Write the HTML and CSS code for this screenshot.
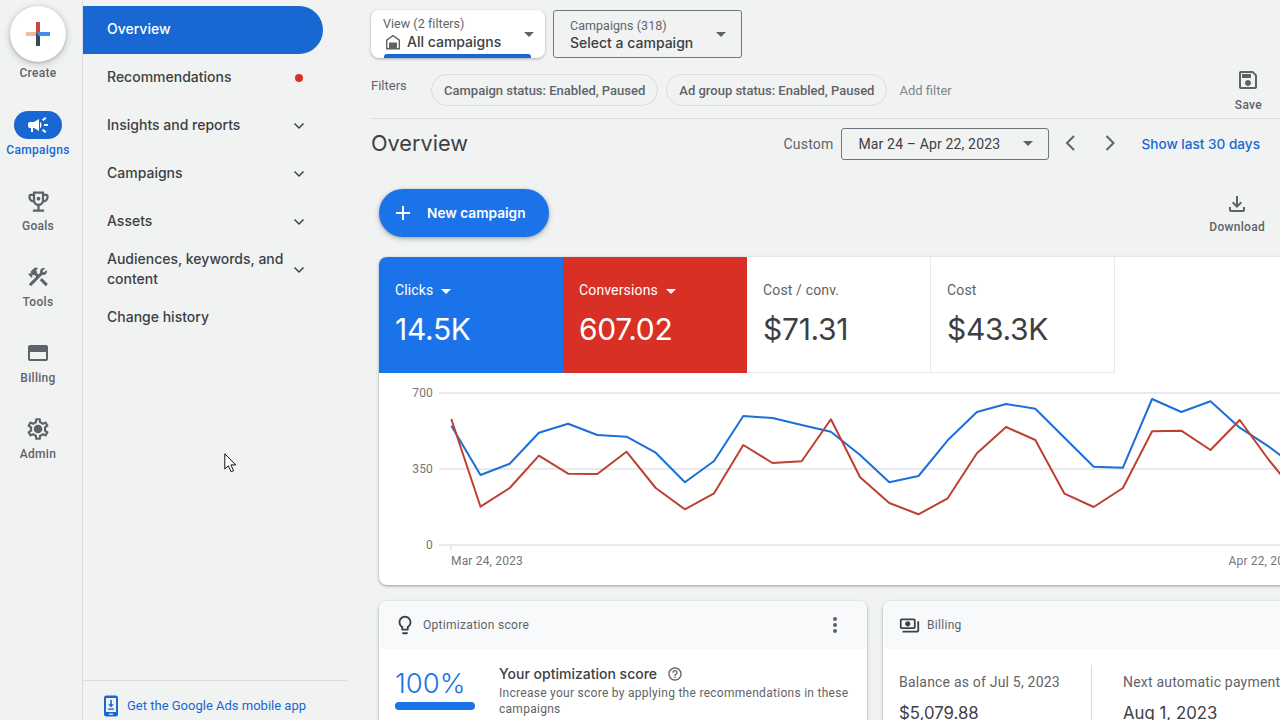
FILE: index.html
```html
<!DOCTYPE html>
<html lang="en">
<head>
<meta charset="utf-8">
<title>Overview</title>
<link rel="stylesheet" href="styles.css">
</head>
<body>
<aside class="rail">
  <div class="create">
    <div class="create-btn">
      <svg width="24" height="24" viewBox="0 0 24 24"><rect x="0" y="10" width="12" height="4" fill="#f0bd96"/><rect x="10" y="12" width="4" height="12" fill="#34495e"/><rect x="10" y="0" width="4" height="12" fill="#d0473a"/><rect x="12" y="10" width="12" height="4" fill="#4a8ae8"/></svg>
    </div>
    <span class="rail-label">Create</span>
  </div>
  <div class="rail-item active">
    <span class="rail-icon"><svg width="24" height="24" viewBox="0 0 24 24"><path d="M18 11v2h4v-2h-4zm-2 6.61c.96.71 2.21 1.65 3.2 2.39.4-.53.8-1.07 1.2-1.6-.99-.74-2.24-1.68-3.2-2.4-.4.54-.8 1.08-1.2 1.61zM20.4 5.6c-.4-.53-.8-1.07-1.2-1.6-.99.74-2.24 1.68-3.2 2.4.4.53.8 1.07 1.2 1.6.96-.72 2.21-1.65 3.2-2.4zM4 9c-1.1 0-2 .9-2 2v2c0 1.1.9 2 2 2h1v4h2v-4h1l5 3V6L8 9H4zm11.5 3c0-1.33-.58-2.53-1.5-3.35v6.69c.92-.81 1.5-2.01 1.5-3.34z"/></svg></span>
    <span class="rail-label">Campaigns</span>
  </div>
  <div class="rail-item">
    <span class="rail-icon"><svg width="27" height="27" viewBox="0 0 24 24"><path d="M19 5h-2V3H7v2H5c-1.1 0-2 .9-2 2v1c0 2.55 1.92 4.63 4.39 4.94.63 1.5 1.98 2.63 3.61 2.96V19H7v2h10v-2h-4v-3.1c1.63-.33 2.98-1.46 3.61-2.96C19.08 12.63 21 10.55 21 8V7c0-1.1-.9-2-2-2zM5 8V7h2v3.82C5.84 10.4 5 9.3 5 8zm7 6c-1.65 0-3-1.35-3-3V5h6v6c0 1.65-1.35 3-3 3zm7-6c0 1.3-.84 2.4-2 2.82V7h2v1z"/><circle cx="12" cy="9.5" r="1.7"/></svg></span>
    <span class="rail-label">Goals</span>
  </div>
  <div class="rail-item">
    <span class="rail-icon"><svg width="24" height="24" viewBox="0 0 24 24"><path d="M13.783 15.172l2.121-2.121 5.996 5.996-2.121 2.121zM17.5 10c1.93 0 3.5-1.57 3.5-3.5 0-.58-.16-1.12-.41-1.6l-2.7 2.7-1.49-1.49 2.7-2.7c-.48-.25-1.02-.41-1.6-.41C15.57 3 14 4.57 14 6.5c0 .41.08.8.21 1.16l-1.85 1.85-1.78-1.78.71-.71-1.41-1.41L12 3.49c-1.17-1.17-3.07-1.17-4.24 0L4.22 7.03l1.41 1.41H2.81l-.71.71 3.54 3.54.71-.71V9.15l1.41 1.41.71-.71 1.78 1.78-7.41 7.41 2.12 2.12L16.34 9.79c.36.13.75.21 1.16.21z"/></svg></span>
    <span class="rail-label">Tools</span>
  </div>
  <div class="rail-item">
    <span class="rail-icon"><svg width="24" height="24" viewBox="0 0 24 24"><path d="M20 4H4c-1.11 0-1.99.89-1.99 2L2 18c0 1.11.89 2 2 2h16c1.11 0 2-.89 2-2V6c0-1.11-.89-2-2-2zm0 14H4v-7h16v7zm0-11H4V6h16v1z"/><rect x="3" y="5" width="18" height="5"/></svg></span>
    <span class="rail-label">Billing</span>
  </div>
  <div class="rail-item">
    <span class="rail-icon"><svg width="26" height="26" viewBox="0 0 24 24"><path d="M19.43 12.98c.04-.32.07-.64.07-.98 0-.34-.03-.66-.07-.98l2.11-1.65c.19-.15.24-.42.12-.64l-2-3.46c-.09-.16-.26-.25-.44-.25-.06 0-.12.01-.17.03l-2.49 1c-.52-.4-1.08-.73-1.69-.98l-.38-2.65C14.46 2.18 14.25 2 14 2h-4c-.25 0-.46.18-.49.42l-.38 2.65c-.61.25-1.17.59-1.69.98l-2.49-1c-.06-.02-.12-.03-.18-.03-.17 0-.34.09-.43.25l-2 3.46c-.13.22-.07.49.12.64l2.11 1.65c-.04.32-.07.65-.07.98 0 .33.03.66.07.98l-2.11 1.65c-.19.15-.24.42-.12.64l2 3.46c.09.16.26.25.44.25.06 0 .12-.01.17-.03l2.49-1c.52.4 1.08.73 1.69.98l.38 2.65c.03.24.24.42.49.42h4c.25 0 .46-.18.49-.42l.38-2.65c.61-.25 1.17-.59 1.69-.98l2.49 1c.06.02.12.03.18.03.17 0 .34-.09.43-.25l2-3.46c.12-.22.07-.49-.12-.64l-2.11-1.65zm-1.98-1.71c.04.31.05.52.05.73 0 .21-.02.43-.05.73l-.14 1.13.89.7 1.08.84-.7 1.21-1.27-.51-1.04-.42-.9.68c-.43.32-.84.56-1.25.73l-1.06.43-.16 1.13-.2 1.35h-1.4l-.19-1.35-.16-1.13-1.06-.43c-.43-.18-.83-.41-1.23-.71l-.91-.7-1.06.43-1.27.51-.7-1.21 1.08-.84.89-.7-.14-1.13c-.03-.31-.05-.54-.05-.74s.02-.43.05-.73l.14-1.13-.89-.7-1.08-.84.7-1.21 1.27.51 1.04.42.9-.68c.43-.32.84-.56 1.25-.73l1.06-.43.16-1.13.2-1.35h1.39l.19 1.35.16 1.13 1.06.43c.43.18.83.41 1.23.71l.91.7 1.06-.43 1.27-.51.7 1.21-1.07.85-.89.7.14 1.13zM12 8c-2.21 0-4 1.79-4 4s1.79 4 4 4 4-1.79 4-4-1.79-4-4-4z"/></svg></span>
    <span class="rail-label">Admin</span>
  </div>
</aside>

<nav class="nav">
  <ul class="nav-list">
    <li class="nav-item selected"><span class="nav-text">Overview</span></li>
    <li class="nav-item"><span class="nav-text">Recommendations</span><span class="dot"></span></li>
    <li class="nav-item"><span class="nav-text">Insights and reports</span><svg class="chev" width="12" height="8" viewBox="0 0 12 8"><path d="M1.5 1.5 6 6l4.5-4.5"/></svg></li>
    <li class="nav-item"><span class="nav-text">Campaigns</span><svg class="chev" width="12" height="8" viewBox="0 0 12 8"><path d="M1.5 1.5 6 6l4.5-4.5"/></svg></li>
    <li class="nav-item"><span class="nav-text">Assets</span><svg class="chev" width="12" height="8" viewBox="0 0 12 8"><path d="M1.5 1.5 6 6l4.5-4.5"/></svg></li>
    <li class="nav-item"><span class="nav-text">Audiences, keywords, and content</span><svg class="chev" width="12" height="8" viewBox="0 0 12 8"><path d="M1.5 1.5 6 6l4.5-4.5"/></svg></li>
    <li class="nav-item"><span class="nav-text">Change history</span></li>
  </ul>
  <div class="nav-foot">
    <svg width="16" height="22" viewBox="0 0 16 22"><rect x="1" y="0.5" width="14" height="21" rx="2.5" fill="#1967d2"/><rect x="3" y="3" width="10" height="14" fill="#f1f3f3"/><rect x="6" y="18.6" width="4" height="1.2" fill="#f1f3f3"/><path d="M7.2 5h1.6v4.2h2L8 12.6 5.200 9.200h2z" fill="#1967d2"/><rect x="5" y="13.500" width="6" height="1.300" fill="#1967d2"/></svg>
    <span>Get the Google Ads mobile app</span>
  </div>
</nav>

<main class="main">
  <header class="top">
    <div class="pickers">
      <div class="picker view">
        <div class="picker-body">
          <span class="picker-small">View (2 filters)</span>
          <span class="picker-big"><svg width="16" height="16" viewBox="0 0 16 16"><path d="M8 .8 1 5.800V15.500h14V5.800L8 .8zM13.600 14H12V8.500H4V14H2.400V6.500L8 2.500l5.600 4V14z" fill="#5f6368"/><rect x="5" y="9.500" width="6" height="5" fill="#5f6368"/></svg>All campaigns</span>
        </div>
        <span class="caret"></span>
        <span class="view-bar"></span>
      </div>
      <div class="picker outlined">
        <div class="picker-body">
          <span class="picker-small">Campaigns (318)</span>
          <span class="picker-big">Select a campaign</span>
        </div>
        <span class="caret"></span>
      </div>
    </div>
    <div class="filters">
      <span class="filters-label">Filters</span>
      <span class="chip">Campaign status: Enabled, Paused</span>
      <span class="chip">Ad group status: Enabled, Paused</span>
      <span class="add-filter">Add filter</span>
      <div class="tool save">
        <svg width="24" height="24" viewBox="0 0 24 24"><path d="M17 3H5c-1.110 0-2 .9-2 2v14c0 1.100.89 2 2 2h14c1.100 0 2-.9 2-2V7l-4-4zm2 16H5V5h11.170L19 7.830V19zm-7-7c-1.660 0-3 1.340-3 3s1.340 3 3 3 3-1.340 3-3-1.340-3-3-3zM6 6h9v4H6z"/></svg>
        <span>Save</span>
      </div>
    </div>
  </header>

  <div class="title-row">
    <h1>Overview</h1>
    <div class="range">
      <span class="custom">Custom</span>
      <div class="date-box"><span>Mar 24 – Apr 22, 2023</span><span class="caret"></span></div>
      <svg class="arrow" width="24" height="24" viewBox="0 0 24 24"><path d="M16 5 9 12l7 7"/></svg>
      <svg class="arrow" width="24" height="24" viewBox="0 0 24 24"><path d="M8.500 5l7 7-7 7"/></svg>
      <span class="last30">Show last 30 days</span>
    </div>
  </div>

  <div class="action-row">
    <button class="new-campaign" type="button">
      <svg width="24" height="24" viewBox="0 0 24 24"><path d="M19 13h-6v6h-2v-6H5v-2h6V5h2v6h6v2z"/></svg>
      <span>New campaign</span>
    </button>
    <div class="tool download">
      <svg width="24" height="24" viewBox="0 0 24 24"><path d="M18 15v3H6v-3H4v3c0 1.100.9 2 2 2h12c1.100 0 2-.9 2-2v-3h-2zm-1-4-1.410-1.410L13 12.170V4h-2v8.170L8.410 9.590 7 11l5 5 5-5z"/></svg>
      <span>Download</span>
    </div>
  </div>

  <section class="card perf">
    <div class="tiles">
      <div class="tile blue"><div class="tile-title">Clicks<span class="caret white"></span></div><div class="tile-value">14.5K</div></div>
      <div class="tile red"><div class="tile-title">Conversions<span class="caret white"></span></div><div class="tile-value">607.02</div></div>
      <div class="tile plain"><div class="tile-title">Cost / conv.</div><div class="tile-value">$71.31</div></div>
      <div class="tile plain"><div class="tile-title">Cost</div><div class="tile-value">$43.3K</div></div>
    </div>
    <svg class="chart" width="1000" height="212" viewBox="379 373 1000 212">
      <g class="grid">
        <line x1="439" y1="393" x2="1379" y2="393"/>
        <line x1="439" y1="469" x2="1379" y2="469"/>
        <line x1="439" y1="545" x2="1379" y2="545"/>
        <line x1="451" y1="545" x2="451" y2="551"/>
      </g>
      <g class="axis">
        <text x="433" y="397" text-anchor="end">700</text>
        <text x="433" y="473" text-anchor="end">350</text>
        <text x="433" y="549" text-anchor="end">0</text>
        <text x="451" y="565">Mar 24, 2023</text>
        <text x="1228.500" y="565">Apr 22, 2023</text>
      </g>
      <polyline class="line-blue" points="451.3,425.700 480.500,475 509.700,463.700 538.900,432.700 568.100,423.700 597.300,435 626.500,436.700 655.700,452.700 684.900,482.300 714.100,461 743.300,416 772.500,418 801.700,425 830.900,431.700 860.100,455 889.300,482.300 918.500,476 947.700,440.300 976.900,412 1006.100,404 1035.300,408.700 1064.500,437.700 1093.700,466.700 1122.900,467.700 1152.100,399 1181.300,412 1210.500,401.300 1239.700,427.700 1268.900,446.700 1298.100,468.700"/>
      <polyline class="line-red" points="451.3,419 480.500,506.700 509.700,488 538.900,455.700 568.100,473.700 597.300,474 626.500,451.700 655.700,488 684.900,509.300 714.100,493.300 743.300,445 772.500,463 801.700,461.300 830.900,419.300 860.100,477.300 889.300,503 918.500,514.300 947.700,498.300 976.900,453.300 1006.100,427 1035.300,440 1064.500,493.700 1093.700,507 1122.900,488 1152.100,431.300 1181.300,430.700 1210.500,450 1239.700,420 1268.900,460 1298.100,496"/>
    </svg>
  </section>

  <div class="cards">
    <section class="card score">
      <div class="card-head">
        <svg class="bulb" width="22" height="22" viewBox="0 0 24 24"><path d="M9 21c0 .55.45 1 1 1h4c.55 0 1-.45 1-1v-1H9v1zm3-19C8.140 2 5 5.140 5 9c0 2.380 1.190 4.470 3 5.740V17c0 .55.45 1 1 1h6c.55 0 1-.45 1-1v-2.260c1.810-1.270 3-3.360 3-5.740 0-3.860-3.140-7-7-7zm2.850 11.100-.85.6V16h-4v-2.300l-.85-.6C7.800 12.160 7 10.630 7 9c0-2.760 2.240-5 5-5s5 2.240 5 5c0 1.630-.8 3.160-2.150 4.100z"/></svg>
        <span class="card-title">Optimization score</span>
        <svg class="more" width="24" height="24" viewBox="0 0 24 24"><circle cx="12" cy="6" r="2"/><circle cx="12" cy="12" r="2"/><circle cx="12" cy="18" r="2"/></svg>
      </div>
      <div class="score-body">
        <div class="score-left">
          <div class="score-num">100%</div>
          <div class="score-bar"></div>
        </div>
        <div class="score-text">
          <div class="score-title">Your optimization score
            <svg width="16" height="16" viewBox="0 0 24 24"><path d="M11 18h2v-2h-2v2zm1-16C6.480 2 2 6.480 2 12s4.480 10 10 10 10-4.480 10-10S17.520 2 12 2zm0 18c-4.410 0-8-3.590-8-8s3.590-8 8-8 8 3.590 8 8-3.590 8-8 8zm0-14c-2.210 0-4 1.790-4 4h2c0-1.100.9-2 2-2s2 .9 2 2c0 2-3 1.750-3 5h2c0-2.250 3-2.500 3-5 0-2.210-1.790-4-4-4z"/></svg>
          </div>
          <p>Increase your score by applying the recommendations in these campaigns</p>
        </div>
      </div>
    </section>
    <section class="card billing">
      <div class="card-head">
        <svg class="cash" width="21" height="21" viewBox="0 0 24 24"><path d="M19 14V6c0-1.100-.9-2-2-2H3c-1.100 0-2 .9-2 2v8c0 1.100.9 2 2 2h14c1.100 0 2-.9 2-2zm-2 0H3V6h14v8zm-7-7c-1.660 0-3 1.340-3 3s1.340 3 3 3 3-1.340 3-3-1.340-3-3-3zm13 0v11c0 1.100-.9 2-2 2H4v-2h17V7h2z"/></svg>
        <span class="card-title">Billing</span>
      </div>
      <div class="billing-body">
        <div class="bill-col first"><div class="bill-label">Balance as of Jul 5, 2023</div><div class="bill-value">$5,079.88</div></div>
        <div class="bill-col"><div class="bill-label">Next automatic payment</div><div class="bill-value">Aug 1, 2023</div></div>
      </div>
    </section>
  </div>
</main>

<svg class="cursor" width="14" height="20" viewBox="0 0 14 20"><path d="M.8.800v15.200l3.600-3.200 2.700 6 2.500-1.100-2.700-5.800h4.800z" fill="#fff" stroke="#111" stroke-width="1"/></svg>
</body>
</html>
```

FILE: styles.css
```css
* { box-sizing: border-box; }
html, body { height: 100%; }
body {
  margin: 0;
  width: 1280px;
  height: 720px;
  overflow: hidden;
  display: flex;
  position: relative;
  background: #f1f3f3;
  color: #202124;
  font-family: Roboto, "Liberation Sans", sans-serif;
}

/* Left rail */
.rail {
  width: 83px;
  flex: none;
  height: 100%;
  border-right: 1px solid #dadce0;
  padding: 6px 6px 0 0;
  display: flex;
  flex-direction: column;
  align-items: center;
}
.create { display: flex; flex-direction: column; align-items: center; margin-bottom: 30px; }
.create-btn {
  width: 56px;
  height: 56px;
  border-radius: 50%;
  background: #fff;
  box-shadow: 0 1px 3px rgba(60,64,67,.3), 0 2px 6px 2px rgba(60,64,67,.15);
  display: flex;
  align-items: center;
  justify-content: center;
}
.rail-label { font-size: 12px; font-weight: 500; line-height: 16px; color: #5f6368; margin-top: 3px; letter-spacing: .3px; white-space: nowrap; }
.rail-item { display: flex; flex-direction: column; align-items: center; height: 76px; }
.rail-icon { width: 48px; height: 28px; border-radius: 14px; display: flex; align-items: center; justify-content: center; }
.rail-icon svg { fill: #5f6368; }
.rail-item.active .rail-icon { background: #1967d2; }
.rail-item.active .rail-icon svg { fill: #fff; }
.rail-item.active .rail-label { color: #1967d2; }

/* Nav */
.nav {
  width: 264px;
  flex: none;
  height: 100%;
  display: flex;
  flex-direction: column;
  font-family: Inter, sans-serif;
}
.nav-list { list-style: none; margin: 0; padding: 6px 0 0; flex: 1; }
.nav-item {
  width: 240px;
  height: 48px;
  padding: 0 18px 0 24px;
  display: flex;
  align-items: center;
  justify-content: space-between;
  font-size: 14px;
  font-weight: 500;
  color: #3c4043;
  line-height: 20px;
}
.nav-text { width: 184px; padding-bottom: 2px; }
.nav-item.selected { background: #1967d2; color: #fff; border-radius: 0 24px 24px 0; }
.dot { width: 8px; height: 8px; border-radius: 50%; background: #d93025; margin-right: 2px; }
.chev { fill: none; stroke: #3c4043; stroke-width: 1.500; flex: none; }
.nav-foot {
  height: 40px;
  border-top: 1px solid #dadce0;
  display: flex;
  align-items: center;
  gap: 8px;
  padding-left: 20px;
  padding-top: 10px;
  font-family: Roboto, sans-serif;
  font-size: 13px;
  color: #1967d2;
}

/* Main */
.main { flex: 1; min-width: 0; padding: 10px 0 0 24px; }
.pickers { display: flex; gap: 8px; height: 48px; }
.picker { position: relative; display: flex; height: 48px; }
.picker-body { display: flex; flex-direction: column; }
.picker-small { font-size: 12.500px; color: #5f6368; line-height: 16px; letter-spacing: .05px; }
.picker-big { font-family: Inter, sans-serif; font-size: 14px; font-weight: 500; color: #3c4043; line-height: 18px; display: flex; align-items: center; gap: 6px; }
.view { width: 174px; background: #fff; border-radius: 8px; box-shadow: 0 1px 3px rgba(60,64,67,.4); padding: 6px 0 0 12px; overflow: hidden; }
.view .picker-big { margin-top: 1px; padding-left: 2px; }
.view .caret { position: absolute; right: 11px; top: 22px; }
.view-bar { position: absolute; left: 13px; right: 14px; bottom: 0; height: 4px; background: #1967d2; border-radius: 3px 3px 0 0; }
.outlined { width: 189px; border: 1px solid #70757a; border-radius: 3px; padding: 7px 0 0 16px; }
.outlined .caret { position: absolute; right: 15px; top: 21px; }
.caret { display: inline-block; width: 0; height: 0; border-left: 5px solid transparent; border-right: 5px solid transparent; border-top: 5px solid #5f6368; }
.caret.white { border-top-color: #fff; margin-left: 8px; vertical-align: 1px; }

.filters {
  display: flex;
  align-items: center;
  margin-top: 16px;
  padding-bottom: 12px;
  border-bottom: 1px solid #dadce0;
  box-sizing: content-box;
  height: 32px;
}
.filters-label { font-size: 13px; color: #5f6368; width: 60px; flex: none; align-self: flex-start; margin-top: 4px; }
.chip {
  height: 32px;
  border: 1px solid #dadce0;
  border-radius: 16px;
  padding: 0 12px;
  display: flex;
  align-items: center;
  font-size: 13px;
  font-weight: 500;
  color: #5f6368;
  margin-right: 8px;
  white-space: nowrap;
}
.add-filter { font-size: 13px; color: #80868b; margin-left: 4px; }
.tool { display: flex; flex-direction: column; align-items: center; font-size: 12px; font-weight: 500; color: #5f6368; letter-spacing: .3px; }
.tool svg { fill: #5f6368; }
.save { margin-left: auto; margin-right: 18px; margin-top: -6px; align-self: flex-start; line-height: 16px; }
.save span { margin-top: 5px; }

.title-row { display: flex; align-items: center; justify-content: space-between; height: 49px; padding: 0 20px 0 0; }
h1 { margin: 0; padding-bottom: 2px; font-family: Inter, sans-serif; font-size: 21.700px; font-weight: 400; color: #3c4043; }
.range { display: flex; align-items: center; }
.custom { font-size: 14px; color: #5f6368; margin-right: 8px; letter-spacing: .2px; }
.date-box {
  width: 208px;
  height: 32px;
  border: 1px solid #70757a;
  border-radius: 3px;
  padding: 0 15px 0 16px;
  display: flex;
  align-items: center;
  justify-content: space-between;
  font-size: 14px;
  color: #3c4043;
  letter-spacing: .15px;
}
.arrow { fill: none; stroke: #5f6368; stroke-width: 2; margin-left: 9px; margin-top: -2px; }
.arrow + .arrow { margin-left: 16px; }
.last30 { font-family: Inter, sans-serif; font-size: 13.600px; font-weight: 500; color: #1967d2; margin-left: 19px; }

.action-row { display: flex; align-items: flex-start; justify-content: space-between; padding: 0 15px 0 8px; margin-top: 21px; height: 48px; margin-bottom: 20px; }
.new-campaign {
  height: 48px;
  width: 170px;
  border: 0;
  border-radius: 24px;
  background: #1a73e8;
  color: #fff;
  display: flex;
  align-items: center;
  gap: 12px;
  padding: 0 0 0 12px;
  font-family: Inter, sans-serif;
  font-size: 13.700px;
  font-weight: 600;
  box-shadow: 0 1px 3px rgba(60,64,67,.3), 0 2px 5px 1px rgba(60,64,67,.2);
}
.new-campaign svg { fill: #fff; }
.download { padding-top: 3px; }
.download span { margin-top: 3px; line-height: 16px; }

.card { background: #fff; border-radius: 8px; box-shadow: 0 1px 2px rgba(60,64,67,.3), 0 1px 3px 1px rgba(60,64,67,.15); overflow: hidden; }
.perf { margin-left: 8px; width: 1000px; height: 328px; }
.tiles { display: flex; height: 116px; }
.tile { width: 184px; height: 116px; padding: 24px 16px 0; }
.tile-title { font-size: 14px; line-height: 18px; letter-spacing: .15px; }
.tile-value { font-family: Inter, sans-serif; font-size: 30px; line-height: 40px; margin-top: 10px; letter-spacing: -.3px; }
.blue { background: #1a73e8; color: #fff; }
.red { background: #d93025; color: #fff; }
.plain { border-right: 1px solid #e8eaed; border-bottom: 1px solid #e8eaed; color: #3c4043; }
.plain .tile-title { color: #5f6368; }
.chart { display: block; }
.grid line { stroke: #e8eaed; stroke-width: 2; }
.axis text { font-family: Roboto, sans-serif; font-size: 12px; fill: #757575; letter-spacing: .17px; }
.line-blue, .line-red { fill: none; stroke-width: 2; stroke-linejoin: round; }
.line-blue { stroke: #1a6fd8; }
.line-red { stroke: #bd4030; }

.cards { display: flex; gap: 16px; margin: 16px 0 0 8px; width: 1100px; }
.card-head { height: 48px; background: #f8f9fa; display: flex; align-items: center; gap: 8px; padding: 0 20px 0 16px; }
.card-head svg { fill: #3c4043; flex: none; }
.bulb { margin: 0 -1px 0 -1px; }
.cash { margin-right: -1px; }
.card-title { font-size: 12px; font-weight: 400; color: #5f6368; letter-spacing: .3px; }
.more { margin-left: auto; }
.card-head .more { fill: #5f6368; }
.score { width: 488px; height: 200px; }
.score-body { display: flex; padding: 16px 16px 0; }
.score-left { width: 104px; flex: none; }
.score-num { font-family: Inter, sans-serif; font-size: 27.500px; line-height: 34px; font-weight: 300; color: #1a73e8; padding-top: 1px; }
.score-bar { width: 80px; height: 8px; background: #1a73e8; border-radius: 4px; margin-top: 2px; }
.score-title { font-family: Inter, sans-serif; font-size: 14px; font-weight: 500; color: #3c4043; line-height: 18px; display: flex; align-items: center; gap: 10px; }
.score-title svg { fill: #5f6368; }
.score-text p { margin: 2px 0 0; font-size: 12px; line-height: 16px; color: #5f6368; letter-spacing: .28px; }
.billing { width: 520px; height: 200px; }
.billing-body { display: flex; padding: 16px 0 0 16px; }
.bill-col { padding-top: 8px; }
.bill-col.first { width: 193px; border-right: 1px solid #dadce0; margin-right: 31px; }
.bill-label { font-size: 14px; line-height: 18px; color: #5f6368; letter-spacing: .2px; white-space: nowrap; }
.bill-value { font-family: Inter, sans-serif; font-size: 16.800px; line-height: 24px; margin-top: 10px; color: #3c4043; white-space: nowrap; }

.cursor { position: absolute; left: 224px; top: 453px; }
```
